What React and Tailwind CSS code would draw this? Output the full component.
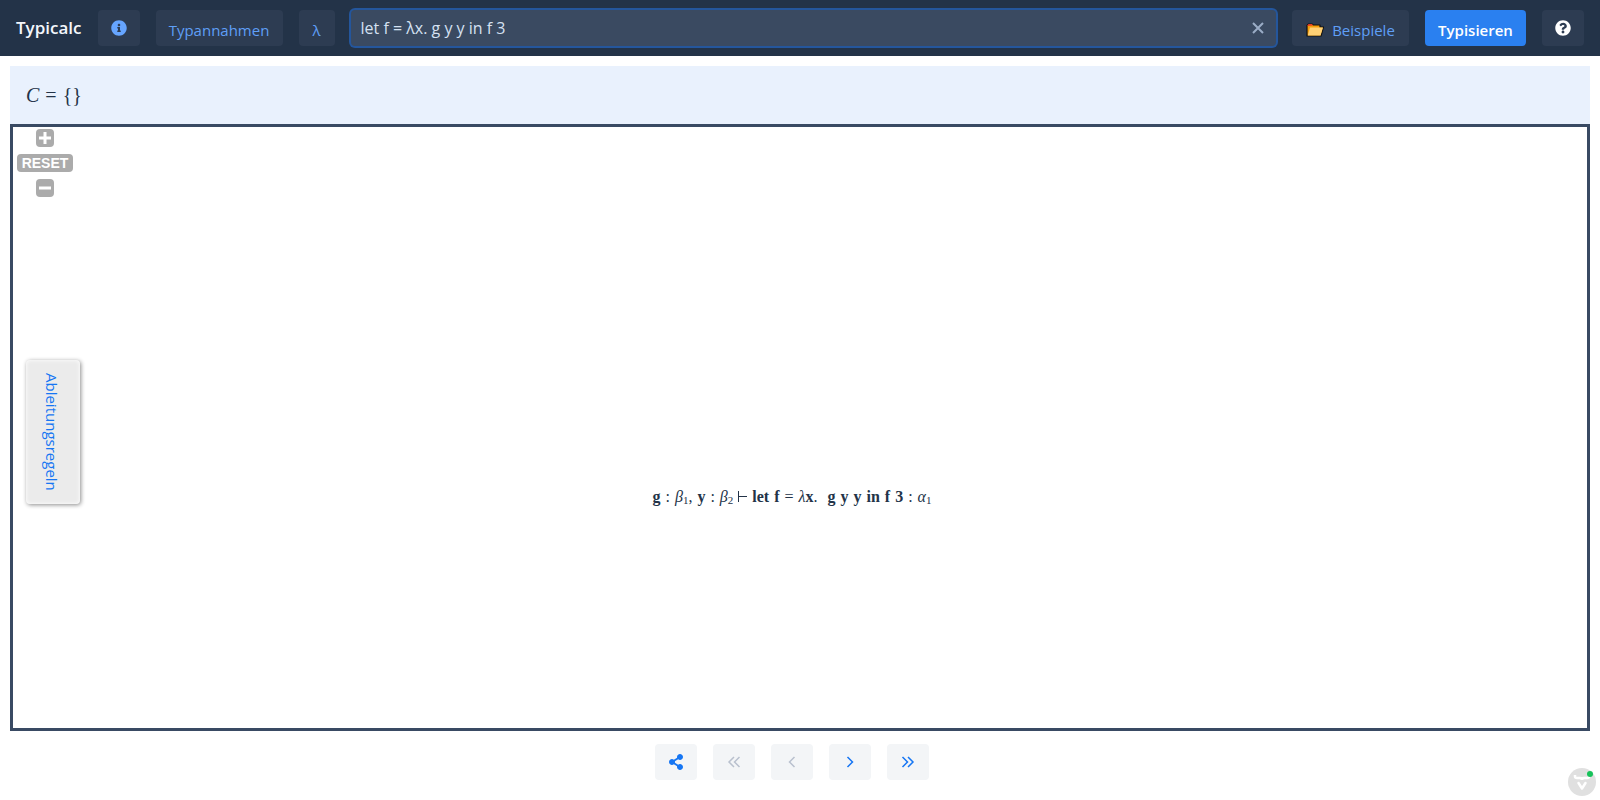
import React from "react";
import { FaShareAlt, FaInfoCircle, FaQuestionCircle } from "react-icons/fa";

const darkButton =
  "flex h-9 shrink-0 items-center justify-center rounded bg-[#2d3c52] text-[15px] text-[#5f9ff7]";

function FolderIcon() {
  return (
    <svg viewBox="0 0 18 14" className="h-[14px] w-[18px]" aria-hidden="true">
      <path d="M1 13V2.5L2.5 1H6l1.5 1H14v2h3.5L15 13Z" fill="#f59e0b" stroke="#111" strokeWidth="1.2" strokeLinejoin="round" />
      <path d="M1 3l1.500-2H6l1 1.500Z" fill="#e53e22" />
      <path d="M4 4.500H17L14.500 12.500H1.800Z" fill="#ffd175" />
    </svg>
  );
}

function Header() {
  return (
    <header className="flex h-14 items-center gap-4 bg-[#233348] px-4">
      <h1 className="text-[17px] leading-6 font-semibold text-[#f3f7fc]">Typicalc</h1>
      <button aria-label="Info" className={darkButton + " w-[42px]"}>
        <FaInfoCircle className="size-4 text-[#66a5ff]" />
      </button>
      <button className={darkButton + " w-[127px] pt-1"}>Typannahmen</button>
      <button className={darkButton + " w-9 pt-1"}>λ</button>
      <div className="flex h-9 min-w-0 grow items-center rounded-sm bg-[#3a4a61] pr-[10px] pl-[10px] ring-2 ring-[#24569c]">
        <input
          aria-label="Term"
          defaultValue="let f = λx. g y y in f 3"
          className="min-w-0 grow bg-transparent text-[#d5e1f2] outline-none"
        />
        <button aria-label="Löschen" className="flex size-4 items-center justify-center">
          <svg viewBox="0 0 12 12" className="size-3" fill="none" stroke="#9aacc6" strokeWidth="2">
            <path d="M1 1l10 10M11 1l-10 10" />
          </svg>
        </button>
      </div>
      <button className={darkButton + " w-[117px] gap-2 pt-1"}>
        <FolderIcon />
        <span>Beispiele</span>
      </button>
      <button className="flex h-9 w-[101px] shrink-0 items-center justify-center rounded bg-[#2a80f0] pt-1 text-[15px] font-semibold text-white">
        Typisieren
      </button>
      <button aria-label="Hilfe" className={darkButton + " w-[42px]"}>
        <FaQuestionCircle className="size-4 text-white" />
      </button>
    </header>
  );
}

function ZoomControls() {
  return (
    <div className="flex w-16 flex-col items-center gap-[7px] pt-[2px]">
      <button aria-label="Vergrößern" className="flex size-[18px] items-center justify-center rounded bg-[#ababab]">
        <svg viewBox="0 0 12 12" className="size-3" stroke="#fff" strokeWidth="3"><path d="M0 6h12M6 0v12" /></svg>
      </button>
      <button className="flex h-[18px] w-14 items-center justify-center rounded bg-[#ababab] font-['Liberation_Sans',sans-serif] text-[14px] leading-none font-bold text-white">
        RESET
      </button>
      <button aria-label="Verkleinern" className="flex size-[18px] items-center justify-center rounded bg-[#ababab]">
        <svg viewBox="0 0 12 12" className="size-3" stroke="#fff" strokeWidth="3"><path d="M0 6h12" /></svg>
      </button>
    </div>
  );
}

const Letter = ({ children }) => <span className="font-semibold">{children}</span>;
const Greek = ({ name, index }) => (
  <span>
    <i>{name}</i>
    <sub className="text-[11px]">{index}</sub>
  </span>
);

function Judgement() {
  return (
    <div className="flex items-baseline gap-[5px] font-['Liberation_Serif',serif] text-[16px] leading-5 whitespace-nowrap text-[#233348]">
      <Letter>g</Letter>
      <span>:</span>
      <span><Greek name="β" index="1" />,</span>
      <Letter>y</Letter>
      <span>:</span>
      <Greek name="β" index="2" />
      <svg viewBox="0 0 9 11" className="h-[11px] w-[9px]" fill="none" stroke="#233348" aria-label="⊢"><path d="M.5 0v11M.5 5.500H9" /></svg>
      <b>let</b>
      <b>f</b>
      <span>=</span>
      <span><i>λ</i><Letter>x</Letter>.</span>
      <span />
      <Letter>g</Letter>
      <Letter>y</Letter>
      <Letter>y</Letter>
      <b>in</b>
      <b>f</b>
      <Letter>3</Letter>
      <span>:</span>
      <Greek name="α" index="1" />
    </div>
  );
}

function NavButton({ label, disabled, children }) {
  return (
    <button
      aria-label={label}
      disabled={disabled}
      className="mr-4 flex h-9 w-[42px] items-center justify-center rounded bg-[#f3f5f7] text-[#1676f3] disabled:text-[#b9c1ce]"
    >
      {children}
    </button>
  );
}

function Chevrons({ d }) {
  return (
    <svg viewBox="0 0 14 12" className="h-3 w-[14px]" fill="none" stroke="currentColor" strokeWidth="1.500">
      <path d={d} />
    </svg>
  );
}

export default function App() {
  return (
    <div className="relative flex min-h-screen flex-col bg-white font-['Open_Sans','Noto_Sans',sans-serif] text-[16px] leading-6">
      <Header />
      <main className="flex grow flex-col px-[10px] pt-[10px]">
        <div className="flex h-[58px] items-center gap-[6px] bg-[#e9f1fd] pl-4 font-['Liberation_Serif',serif] text-[20px] text-[#233348]">
          <i>C</i>
          <span>=</span>
          <span>{"{}"}</span>
        </div>
        <section className="relative flex grow flex-col border-[3px] border-[#394a63]">
          <ZoomControls />
          <div className="flex grow items-center justify-center pt-[68px] pr-4">
            <Judgement />
          </div>
          <button className="absolute top-[233px] left-[13px] flex h-36 w-[54px] items-center justify-center rounded bg-[#ebebeb] pr-[2px] text-[15px] text-[#1676f3] shadow-[inset_0_0_4px_#fff,1px_1px_4px_rgba(0,0,0,0.45)] [writing-mode:vertical-rl]">
            Ableitungsregeln
          </button>
        </section>
      </main>
      <footer className="flex justify-center pt-[13px] pb-5">
        <NavButton label="Teilen"><FaShareAlt className="size-4" /></NavButton>
        <NavButton label="Erster Schritt" disabled><Chevrons d="M7 1L2 6l5 5M12.500 1l-5 5 5 5" /></NavButton>
        <NavButton label="Vorheriger Schritt" disabled><Chevrons d="M9.500 1l-5 5 5 5" /></NavButton>
        <NavButton label="Nächster Schritt"><Chevrons d="M4.500 1l5 5-5 5" /></NavButton>
        <NavButton label="Letzter Schritt"><Chevrons d="M1.500 1l5 5-5 5M7 1l5 5-5 5" /></NavButton>
      </footer>
      <button aria-label="Entwicklerwerkzeuge" className="absolute right-1 bottom-1 size-7">
        <svg viewBox="0 0 28 28" className="size-7" fill="none">
          <circle cx="14" cy="14" r="14" fill="#e0e0e0" />
          <path d="M7 7v1.500q0 1.500 2 1.500h3q2 0 2 2 0-2 2-2h3q2 0 2-1.500V7" stroke="#fff" strokeWidth="2.500" />
          <path d="M10.500 15l3.500 5.500 3.500-5.500" stroke="#fff" strokeWidth="2.500" strokeLinecap="round" strokeLinejoin="round" />
          <circle cx="22" cy="6" r="3" fill="#17c25a" />
        </svg>
      </button>
    </div>
  );
}
